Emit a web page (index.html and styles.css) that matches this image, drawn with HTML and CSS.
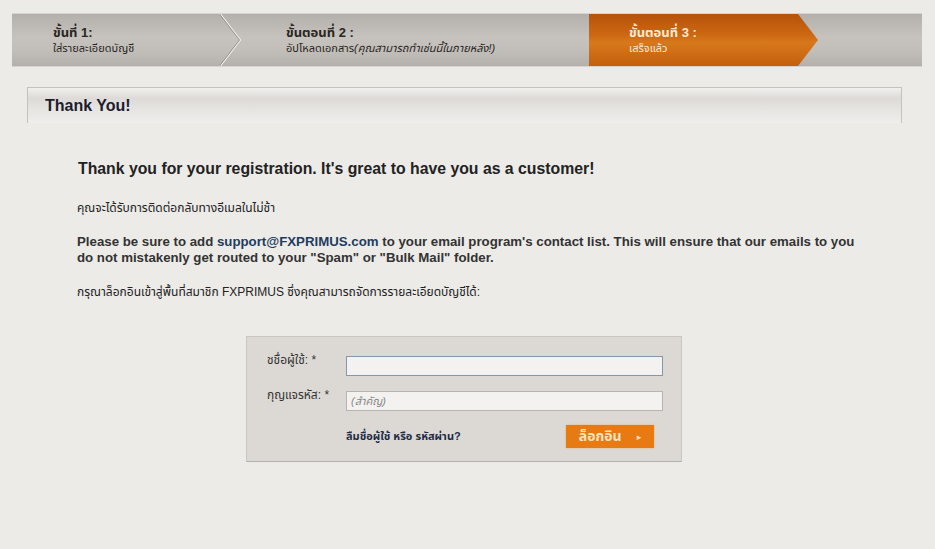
FILE: index.html
```html
<!DOCTYPE html>
<html lang="th">
<head>
<meta charset="utf-8">
<title>Thank You</title>
<link rel="stylesheet" href="styles.css">
</head>
<body>
<div class="steps">
  <div class="step step-1">
    <div class="step-title">ขั้นที่ 1:</div>
    <div class="step-sub">ใส่รายละเอียดบัญชี</div>
    <svg class="chev" width="22" height="52" viewBox="0 0 22 52"><polyline points="0.5,0 20.5,26 0.5,52" fill="none" stroke="#f2f0ee" stroke-width="1.2"/><polyline points="-0.5,0 19.5,26 -0.5,52" fill="none" stroke="#8d8985" stroke-width="0.8"/></svg>
  </div>
  <div class="step step-2">
    <div class="step-title">ขั้นตอนที่ 2 :</div>
    <div class="step-sub">อัปโหลดเอกสาร<i>(คุณสามารถทำเช่นนี้ในภายหลัง!)</i></div>
  </div>
  <div class="step step-3">
    <div class="step-title">ขั้นตอนที่ 3 :</div>
    <div class="step-sub">เสร็จแล้ว</div>
  </div>
  <div class="step step-rest"></div>
</div>

<div class="panel-head">Thank You!</div>

<div class="content">
  <h2 class="lead">Thank you for your registration. It's great to have you as a customer!</h2>
  <p class="thai">คุณจะได้รับการติดต่อกลับทางอีเมลในไม่ช้า</p>
  <p class="note">Please be sure to add <a class="mail" href="#">support@FXPRIMUS.com</a> to your email program's contact list. This will ensure that our emails to you do not mistakenly get routed to your "Spam" or "Bulk Mail" folder.</p>
  <p class="thai">กรุณาล็อกอินเข้าสู่พื้นที่สมาชิก FXPRIMUS ซึ่งคุณสามารถจัดการรายละเอียดบัญชีได้:</p>

  <form class="login">
    <label class="lbl">ชชื่อผู้ใช้: *</label>
    <input class="field focus" type="text">
    <label class="lbl">กุญแจรหัส: *</label>
    <input class="field" type="text" placeholder="(สำคัญ)">
    <div></div>
    <div class="actions">
      <a class="forgot" href="#">ลืมชื่อผู้ใช้ หรือ รหัสผ่าน?</a>
      <button class="btn" type="button">ล็อกอิน <span class="arr">&#9656;</span></button>
    </div>
  </form>
</div>
</body>
</html>
```
FILE: styles.css
```css
body {
  margin: 0;
  background: #ecebe8;
  font-family: "Liberation Sans", "Noto Sans Thai", "Noto Sans", "DejaVu Sans", sans-serif;
  color: #222;
}

.steps {
  display: flex;
  margin: 13px 13px 0 12px;
  height: 52px;
  border-top: 1px solid #d6d3d0;
  border-bottom: 1px solid #d6d3d0;
  background: linear-gradient(#b3afab, #c6c2be 45%, #c2beba 70%, #b4b0ac);
}

.step {
  box-sizing: border-box;
  height: 52px;
  padding-top: 11px;
}

.step-title {
  font-size: 13px;
  font-weight: bold;
  line-height: 16px;
  color: #2a2622;
}

.step-sub {
  font-size: 11px;
  line-height: 14px;
  color: #2a2622;
}

.step-1 {
  position: relative;
  width: 210px;
  padding-left: 41px;
}

.chev {
  position: absolute;
  right: -20px;
  top: 0;
}

.step-2 {
  width: 367px;
  padding-left: 64px;
}

.step-3 {
  width: 229px;
  padding-left: 40px;
  background: linear-gradient(#b6520a, #cc6812 40%, #d8781c 55%, #c2600e);
  clip-path: polygon(0 0, 209px 0, 100% 50%, 209px 100%, 0 100%);
}

.step-3 .step-title,
.step-3 .step-sub {
  color: #fbead6;
}

.step-rest {
  flex: 1;
}

.panel-head {
  box-sizing: border-box;
  margin: 20px 0 0 27px;
  width: 875px;
  height: 36px;
  padding: 9px 0 0 17px;
  border: 1px solid #c4c2bf;
  border-bottom: none;
  background: linear-gradient(#f1f0ee, #dddad7 30%, #e6e4e1 60%, #efeeec);
  font-size: 16px;
  font-weight: bold;
  color: #1d1c2e;
}

.content {
  padding-left: 77px;
}

.lead {
  margin: 36px 0 0 1px;
  font-size: 15.8px;
  line-height: 20px;
  color: #222;
}

.thai {
  margin: 21px 0 0;
  font-size: 12px;
  line-height: 16px;
  color: #222;
}

.note {
  margin: 18px 0 0;
  width: 790px;
  font-size: 13.25px;
  font-weight: bold;
  line-height: 16px;
  color: #333;
}

.note + .thai {
  margin-top: 18px;
}

.mail {
  color: #1f3c5f;
  text-decoration: none;
}

.login {
  box-sizing: border-box;
  margin: 36px 0 0 169px;
  width: 436px;
  height: 126px;
  padding: 19px 0 0 20px;
  display: grid;
  grid-template-columns: 79px 317px;
  grid-auto-rows: min-content;
  row-gap: 15px;
  background: #dcd9d5;
  border: 1px solid #c9c6c2;
  border-bottom-color: #b3b0ac;
}

.lbl {
  font-size: 12px;
  line-height: 14px;
  color: #333;
  margin-top: -3px;
}

.field {
  box-sizing: border-box;
  width: 317px;
  height: 20px;
  margin: 0;
  padding: 0 4px;
  border: 1px solid #b7b5b2;
  background: #f3f2f0;
  font-family: inherit;
  font-size: 11px;
}

.field.focus {
  border-color: #8497ab;
}

.field::placeholder {
  color: #888;
  font-style: italic;
}

.actions {
  display: flex;
  justify-content: space-between;
  align-items: center;
  padding-right: 9px;
  margin-top: -1px;
}

.forgot {
  font-size: 11px;
  font-weight: bold;
  color: #1d2b45;
  text-decoration: none;
}

.btn {
  width: 88px;
  height: 23px;
  border: none;
  background: #e77a12;
  color: #fbe3bf;
  font-family: inherit;
  font-size: 14px;
  font-weight: bold;
  padding: 0;
  display: flex;
  align-items: center;
  justify-content: center;
  gap: 15px;
  box-shadow: 0 0 2px #f0b060;
}

.arr {
  font-size: 9px;
}
```
